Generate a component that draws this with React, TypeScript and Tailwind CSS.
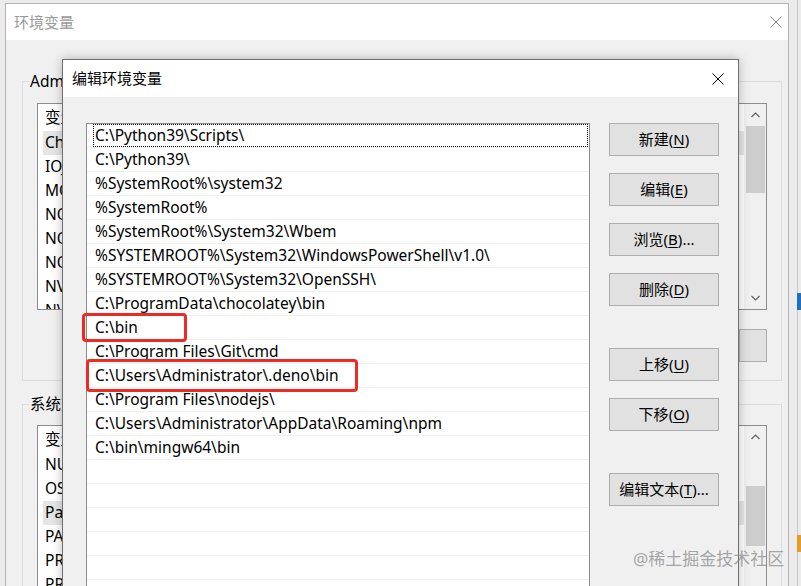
import React from "react";

const paths = [
  "C:\\Python39\\Scripts\\",
  "C:\\Python39\\",
  "%SystemRoot%\\system32",
  "%SystemRoot%",
  "%SystemRoot%\\System32\\Wbem",
  "%SYSTEMROOT%\\System32\\WindowsPowerShell\\v1.0\\",
  "%SYSTEMROOT%\\System32\\OpenSSH\\",
  "C:\\ProgramData\\chocolatey\\bin",
  "C:\\bin",
  "C:\\Program Files\\Git\\cmd",
  "C:\\Users\\Administrator\\.deno\\bin",
  "C:\\Program Files\\nodejs\\",
  "C:\\Users\\Administrator\\AppData\\Roaming\\npm",
  "C:\\bin\\mingw64\\bin",
  "",
  "",
  "",
  "",
  "",
  "",
];

const userVars = [
  "ChocolateyLastPathUpdate",
  "IOJS_HOME",
  "MOZ_PLUGIN_PATH",
  "NODE_HOME",
  "NODE_PATH",
  "NODE_OPTIONS",
  "NVM_HOME",
  "NVM_SYMLINK",
];

const sysVars = [
  "NUMBER_OF_PROCESSORS",
  "OS",
  "Path",
  "PATHEXT",
  "PROCESSOR_ARCHITECTURE",
  "PROCESSOR_IDENTIFIER",
];

function CloseIcon({ className }: { className?: string }) {
  return (
    <svg width="12" height="12" viewBox="0 0 12 12" className={className}>
      <path d="M0.5 0.5L11.5 11.5M11.5 0.5L0.5 11.5" stroke="currentColor" strokeWidth="1" fill="none" />
    </svg>
  );
}

function Chevron({ up }: { up?: boolean }) {
  return (
    <svg width="9" height="6" viewBox="0 0 9 6">
      <path
        d={up ? "M0.5 5L4.5 1L8.5 5" : "M0.5 1L4.5 5L8.5 1"}
        stroke="#606060"
        strokeWidth="1.2"
        fill="none"
      />
    </svg>
  );
}

function Btn({ label, mn, tail, className = "" }: { label: string; mn: string; tail?: string; className?: string }) {
  return (
    <button
      className={`w-[110px] h-[33px] shrink-0 bg-[#e1e1e1] border border-[#adadad] text-[15px] text-black flex items-center justify-center ${className}`}
    >
      {label}(<u className="underline underline-offset-2">{mn}</u>){tail}
    </button>
  );
}

function BgList({ rows, selected, height, thumbTop, thumbH }: { rows: string[]; selected: number; height: string; thumbTop: string; thumbH: string }) {
  return (
    <div className={`flex border border-[#8c8c8c] bg-white ${height}`}>
      <div className="flex-1 flex flex-col overflow-hidden pl-[5px] text-[15.5px] text-black">
        <div className="h-[27px] shrink-0 flex items-center pl-[2px]">变量</div>
        {rows.map((r, i) => (
          <div
            key={r}
            className={`h-[24px] shrink-0 flex items-center pl-[2px] whitespace-nowrap ${i === selected ? "bg-[#e5e5e5]" : ""}`}
          >
            {r}
          </div>
        ))}
      </div>
      <div className="w-[22px] shrink-0 bg-[#f0f0f0] flex flex-col items-center">
        <div className="h-[22px] flex items-center justify-center shrink-0">
          <Chevron up />
        </div>
        <div className={`w-[19px] bg-[#cdcdcd] ${thumbTop} ${thumbH}`} />
        <div className="flex-1" />
        <div className="h-[22px] flex items-center justify-center shrink-0">
          <Chevron />
        </div>
      </div>
    </div>
  );
}

function BackgroundWindow() {
  return (
    <div className="absolute left-[5px] top-[3px] w-[784px] h-[640px] flex flex-col border border-[#b4b4b4] bg-[#f0f0f0]">
      <div className="h-[36px] shrink-0 bg-white flex items-center justify-between pl-[8px] pr-[6px]">
        <span className="text-[15px] text-[#9a9a9a]">环境变量</span>
        <CloseIcon className="text-[#8a8a8a]" />
      </div>
      <div className="flex flex-col pt-[31px] pl-[16px] pr-[6px]">
        <fieldset className="border border-[#dcdcdc] px-[14px] pb-[18px]">
          <legend className="ml-[-8px] px-[1px] text-[15.5px] leading-[20px] text-black">Administrator 的用户变量(U)</legend>
          <div className="mt-[12px]">
            <BgList rows={userVars} selected={0} height="h-[207px]" thumbTop="mt-[0px]" thumbH="h-[67px]" />
          </div>
          <div className="mt-[19px] flex justify-end gap-[10px]">
            <button className="w-[80px] h-[33px] bg-[#e1e1e1] border border-[#adadad] text-[15px]">新建</button>
            <button className="w-[80px] h-[33px] bg-[#e1e1e1] border border-[#adadad] text-[15px]">编辑</button>
            <button className="w-[28px] h-[33px] bg-[#e1e1e1] border border-[#adadad] text-[15px]"></button>
          </div>
        </fieldset>
        <fieldset className="mt-[13px] border border-[#dcdcdc] px-[14px] pb-[18px]">
          <legend className="ml-[-8px] px-[1px] text-[15.5px] leading-[20px] text-black">系统变量(S)</legend>
          <div className="mt-[11px]">
            <BgList rows={sysVars} selected={2} height="h-[200px]" thumbTop="mt-[38px]" thumbH="h-[60px]" />
          </div>
        </fieldset>
      </div>
    </div>
  );
}

function EditDialog() {
  return (
    <div className="absolute left-[62px] top-[59px] w-[677px] h-[560px] flex flex-col border border-[#707070] bg-[#f0f0f0] shadow-[0_0_10px_rgba(0,0,0,0.25)]">
      <div className="h-[37px] shrink-0 bg-white flex items-center justify-between pl-[9px] pr-[14px]">
        <span className="text-[15px] text-black">编辑环境变量</span>
        <CloseIcon className="text-black" />
      </div>
      <div className="flex pt-[26px] pl-[23px] gap-[19px]">
        <div className="w-[504px] h-[500px] shrink-0 border border-[#8c8c8c] bg-white flex flex-col text-[15.5px] text-black">
          {paths.map((p, i) => (
            <div key={i} className="h-[24px] shrink-0 border-b border-[#efefef] pl-[6px] pr-[1px]">
              <div
                className={`h-full flex items-center pl-[1px] whitespace-nowrap ${
                  i === 0 ? "border border-dotted border-black" : "border border-transparent"
                }`}
              >
                {p}
              </div>
            </div>
          ))}
        </div>
        <div className="flex flex-col gap-[17px]">
          <Btn label="新建" mn="N" />
          <Btn label="编辑" mn="E" />
          <Btn label="浏览" mn="B" tail="..." />
          <Btn label="删除" mn="D" />
          <Btn label="上移" mn="U" className="mt-[25px]" />
          <Btn label="下移" mn="O" />
          <Btn label="编辑文本" mn="T" tail="..." className="mt-[25px]" />
        </div>
      </div>
    </div>
  );
}

export default function App() {
  return (
    <div className="relative w-[801px] h-[586px] overflow-hidden bg-[#ebebeb] font-['Noto_Sans','Noto_Sans_CJK_SC',sans-serif]">
      {/* desktop bits peeking out at the right edge */}
      <div className="absolute left-[797px] top-0 w-px h-[586px] bg-[#c8c8c8]" />
      <div className="absolute left-[797px] top-[293px] w-[4px] h-[17px] bg-[#1f6fc0]" />
      <div className="absolute left-[797px] top-[535px] w-[4px] h-[17px] bg-[#e39b2a]" />

      <BackgroundWindow />
      <EditDialog />

      {/* red annotation boxes */}
      <div className="absolute left-[82px] top-[313px] w-[105px] h-[29px] border-[3px] border-[#ec2b24] rounded-[4px]" />
      <div className="absolute left-[86px] top-[359px] w-[272px] h-[33px] border-[3px] border-[#ec2b24] rounded-[4px]" />

      <div className="absolute left-[633px] top-[548px] text-[17px] leading-[22px] text-[rgba(130,130,130,0.7)] whitespace-nowrap">
        @稀土掘金技术社区
      </div>
    </div>
  );
}
